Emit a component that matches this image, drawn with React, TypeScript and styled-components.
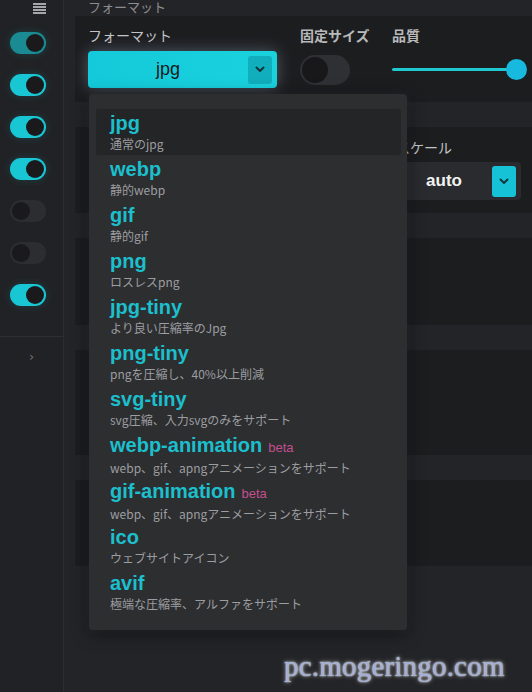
import styled, { createGlobalStyle } from "styled-components";

const GlobalStyle = createGlobalStyle`
  html, body {
    margin: 0;
    padding: 0;
    background: #232427;
    font-family: "Noto Sans CJK JP", "Liberation Sans", sans-serif;
  }
  * { box-sizing: border-box; }
`;

const Page = styled.div`
  position: relative;
  display: flex;
  width: 532px;
  height: 692px;
  overflow: hidden;
  background: #232427;
`;

// left rail with the toggles
const Sidebar = styled.aside`
  width: 64px;
  flex-shrink: 0;
  background: #212225;
  border-right: 1px solid #2c2d30;
  display: flex;
  flex-direction: column;
  padding-top: 3px;
`;

const MenuIcon = styled.svg`
  margin-left: 33px;
  display: block;
`;

const ToggleList = styled.div`
  display: flex;
  flex-direction: column;
  gap: 20px;
  padding: 18px 0 0 10px;
`;

const SmallToggle = styled.div<{ on?: boolean; dim?: boolean }>`
  position: relative;
  width: 36px;
  height: 22px;
  border-radius: 11px;
  background: ${(p) => (p.on ? (p.dim ? "#1a8a93" : "#18c6d4") : "#2c2d30")};
  box-shadow: ${(p) => (p.on ? "0 0 8px rgba(24,198,212,0.18)" : "none")};
  &::after {
    content: "";
    position: absolute;
    top: 2px;
    left: ${(p) => (p.on ? "16px" : "2px")};
    width: 18px;
    height: 18px;
    border-radius: 50%;
    background: #1a1a1c;
  }
`;

const RailDivider = styled.div`
  height: 1px;
  background: #2e2f32;
  margin-top: 30px;
`;

const Chevron = styled.div`
  margin: 10px 0 0 29px;
  color: #6f7074;
  font-size: 13px;
  line-height: 20px;
  font-family: "DejaVu Sans", sans-serif;
`;

const Main = styled.main`
  flex: 1;
  padding-left: 11px;
  display: flex;
  flex-direction: column;
`;

const SectionTitle = styled.div`
  height: 14px;
  padding-left: 13px;
  color: #8c8d90;
  font-size: 13px;
  line-height: 14px;
  white-space: nowrap;
`;

const Panel = styled.section<{ h: number }>`
  height: ${(p) => p.h}px;
  background: #1c1d1f;
  margin-top: 25px;
  &:first-of-type {
    margin-top: 2px;
  }
`;

const PanelRow = styled.div<{ pad: number }>`
  display: flex;
  padding: ${(p) => p.pad}px 0 0 13px;
`;

const Field = styled.div<{ w: number; ml?: number }>`
  position: relative;
  width: ${(p) => p.w}px;
  margin-left: ${(p) => p.ml ?? 0}px;
  display: flex;
  flex-direction: column;
`;

const Label = styled.div`
  color: #c3c4c6;
  font-size: 14px;
  line-height: 18px;
  white-space: nowrap;
`;

const BoldLabel = styled(Label)`
  font-weight: 700;
  color: #b8b9bb;
`;

const CyanSelect = styled.div`
  margin-top: 7px;
  height: 37px;
  border-radius: 4px;
  background: linear-gradient(90deg, #14c9d9, #1ad2de);
  box-shadow: 0 0 16px rgba(190, 215, 255, 0.32);
  display: flex;
  align-items: center;
  padding: 0 5px 0 0;
`;

const SelectValue = styled.div<{ light?: boolean }>`
  flex: 1;
  text-align: center;
  font-family: "Liberation Sans", Arial, sans-serif;
  font-size: ${(p) => (p.light ? 17 : 18)}px;
  font-weight: ${(p) => (p.light ? 700 : 400)};
  color: ${(p) => (p.light ? "#f2f2f2" : "#16191b")};
`;

const ArrowBox = styled.div<{ bright?: boolean }>`
  width: 24px;
  height: ${(p) => (p.bright ? 31 : 28)}px;
  border-radius: 3px;
  background: ${(p) => (p.bright ? "#16c3d6" : "#11aebd")};
  display: flex;
  align-items: center;
  justify-content: center;
`;

const BigToggle = styled.div`
  position: relative;
  margin-top: 11px;
  width: 50px;
  height: 30px;
  border-radius: 15px;
  background: #2f3033;
  &::after {
    content: "";
    position: absolute;
    top: 2px;
    left: 2px;
    width: 26px;
    height: 26px;
    border-radius: 50%;
    background: #18181a;
  }
`;

const SliderWrap = styled.div`
  margin-top: 7px;
  height: 37px;
  display: flex;
  align-items: center;
`;

const SliderTrack = styled.div`
  position: relative;
  width: 125px;
  height: 3px;
  border-radius: 2px;
  background: #1ec9cf;
`;

const SliderThumb = styled.div`
  position: absolute;
  right: -10px;
  top: -9px;
  width: 21px;
  height: 21px;
  border-radius: 50%;
  background: #17b9de;
`;

const DarkSelect = styled.div`
  margin-top: 6px;
  height: 38px;
  border-radius: 4px;
  background: #2a2b2e;
  display: flex;
  align-items: center;
  padding-right: 5px;
`;

// dropdown list, lies over the panels
const Menu = styled.ul`
  position: absolute;
  top: 68px;
  left: 1px;
  width: 318px;
  margin: 0;
  padding: 15px 6px 15px 7px;
  list-style: none;
  background: #2d2e30;
  border-radius: 4px;
  box-shadow: 0 4px 18px rgba(0, 0, 0, 0.45), 0 0 10px rgba(120, 130, 150, 0.12);
  z-index: 10;
`;

const Option = styled.li<{ active?: boolean }>`
  height: 46px;
  padding: 3px 14px 0;
  border-radius: 3px;
  background: ${(p) => (p.active ? "#242527" : "transparent")};
`;

const OptionTitle = styled.div`
  display: flex;
  align-items: baseline;
  gap: 6px;
  font-family: "Liberation Sans", Arial, sans-serif;
  font-weight: 700;
  font-size: 20px;
  line-height: 23px;
  color: #1cbfcc;
`;

const Beta = styled.span`
  font-family: "Liberation Sans", Arial, sans-serif;
  font-weight: 400;
  font-size: 13px;
  color: #c2508e;
`;

const OptionDesc = styled.div`
  font-size: 12px;
  line-height: 17px;
  color: #9c9da0;
  white-space: nowrap;
`;

const Watermark = styled.div`
  position: absolute;
  left: 284px;
  top: 650px;
  font-family: "Liberation Serif", serif;
  font-size: 29px;
  color: #a3b0d4;
  text-shadow: 0 0 2px #fff, 0 0 5px rgba(255, 255, 255, 0.55);
  letter-spacing: 0.2px;
`;

const ChevronDown = ({ color }: { color: string }) => (
  <svg width="10" height="7" viewBox="0 0 10 7">
    <path d="M1.5 1.5 L5 5 L8.5 1.5" stroke={color} strokeWidth="2" fill="none" strokeLinecap="round" strokeLinejoin="round" />
  </svg>
);

const formats = [
  { name: "jpg", desc: "通常のjpg" },
  { name: "webp", desc: "静的webp" },
  { name: "gif", desc: "静的gif" },
  { name: "png", desc: "ロスレスpng" },
  { name: "jpg-tiny", desc: "より良い圧縮率のJpg" },
  { name: "png-tiny", desc: "pngを圧縮し、40%以上削減" },
  { name: "svg-tiny", desc: "svg圧縮、入力svgのみをサポート" },
  { name: "webp-animation", desc: "webp、gif、apngアニメーションをサポート", beta: true },
  { name: "gif-animation", desc: "webp、gif、apngアニメーションをサポート", beta: true },
  { name: "ico", desc: "ウェブサイトアイコン" },
  { name: "avif", desc: "極端な圧縮率、アルファをサポート" },
];

const toggles = [
  { on: true, dim: true },
  { on: true },
  { on: true },
  { on: true },
  { on: false },
  { on: false },
  { on: true },
];

export default function App() {
  return (
    <>
      <GlobalStyle />
      <Page>
        <Sidebar>
          <MenuIcon width="13" height="11" viewBox="0 0 13 11">
            <rect x="0" y="0" width="13" height="2" fill="#a5a6a9" />
            <rect x="0" y="3" width="13" height="2" fill="#a5a6a9" />
            <rect x="0" y="6" width="13" height="2" fill="#a5a6a9" />
            <rect x="0" y="9" width="13" height="2" fill="#a5a6a9" />
          </MenuIcon>
          <ToggleList>
            {toggles.map((t, i) => (
              <SmallToggle key={i} on={t.on} dim={t.dim} />
            ))}
          </ToggleList>
          <RailDivider />
          <Chevron>›</Chevron>
        </Sidebar>

        <Main>
          <SectionTitle>フォーマット</SectionTitle>

          <Panel h={86}>
            <PanelRow pad={10}>
              <Field w={189}>
                <Label>フォーマット</Label>
                <CyanSelect>
                  <SelectValue>jpg</SelectValue>
                  <ArrowBox>
                    <ChevronDown color="#15353a" />
                  </ArrowBox>
                </CyanSelect>
                <Menu>
                  {formats.map((f, i) => (
                    <Option key={f.name} active={i === 0}>
                      <OptionTitle>
                        {f.name}
                        {f.beta && <Beta>beta</Beta>}
                      </OptionTitle>
                      <OptionDesc>{f.desc}</OptionDesc>
                    </Option>
                  ))}
                </Menu>
              </Field>
              <Field w={50} ml={23}>
                <BoldLabel>固定サイズ</BoldLabel>
                <BigToggle />
              </Field>
              <Field w={140} ml={42}>
                <BoldLabel>品質</BoldLabel>
                <SliderWrap>
                  <SliderTrack>
                    <SliderThumb />
                  </SliderTrack>
                </SliderWrap>
              </Field>
            </PanelRow>
          </Panel>

          <Panel h={86}>
            <PanelRow pad={11}>
              <Field w={125} ml={308}>
                <Label>スケール</Label>
                <DarkSelect>
                  <SelectValue light>auto</SelectValue>
                  <ArrowBox bright>
                    <ChevronDown color="#143a40" />
                  </ArrowBox>
                </DarkSelect>
              </Field>
            </PanelRow>
          </Panel>

          <Panel h={87} />
          <Panel h={105} />
          <Panel h={86} />
        </Main>

        <Watermark>pc.mogeringo.com</Watermark>
      </Page>
    </>
  );
}
